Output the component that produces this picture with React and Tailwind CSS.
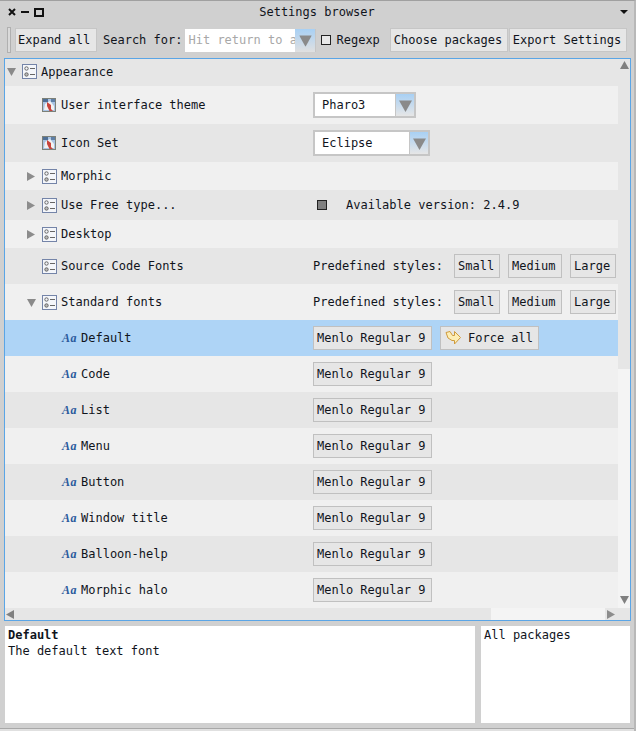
import React from 'react';

const FONT = "font-['DejaVu_Sans_Mono',monospace]";

function TriDown({ className = '' }) {
  return (
    <svg width="9" height="9" viewBox="0 0 9 9" className={className}>
      <path d="M0 1H9L4.5 9Z" fill="#8a8a8a" />
    </svg>
  );
}

function TriRight({ className = '' }) {
  return (
    <svg width="9" height="9" viewBox="0 0 9 9" className={className}>
      <path d="M0 0V9L8 4.5Z" fill="#8c8c8c" />
    </svg>
  );
}

function GroupIcon() {
  return (
    <svg width="15" height="15" viewBox="0 0 15 15" className="mr-px shrink-0">
      <rect x="0.5" y="0.5" width="14" height="14" fill="#f4f6fa" stroke="#7484a8" />
      <circle cx="4.5" cy="4.5" r="1.7" fill="none" stroke="#666" />
      <circle cx="4.5" cy="10.5" r="1.7" fill="#bbb" stroke="#666" />
      <path d="M8 4.5H13M8 10.5H13" stroke="#666" />
    </svg>
  );
}

function ThemeIcon() {
  return (
    <svg width="14" height="14" viewBox="0 0 14 14" className="mr-[2px] shrink-0">
      <rect x="0.5" y="0.5" width="13" height="13" fill="#a9c4e4" stroke="#7c8078" />
      <rect x="1" y="1" width="5" height="3" fill="#4f6f96" />
      <rect x="9" y="1" width="4" height="3" fill="#5f7fa6" />
      <path d="M2 12L3 6L8 3L12 8V12Z" fill="#f2f2f2" />
      <path d="M5 4L9 7L9 11L11 13H7.5L5 8Z" fill="#c8443c" />
    </svg>
  );
}

function FontIcon() {
  return (
    <span className="mr-px w-[15px] shrink-0 whitespace-nowrap font-['Liberation_Serif',serif] text-[12px] font-bold italic leading-none tracking-[0.5px] text-[#2a5a9c]">
      Aa
    </span>
  );
}

function ForceIcon() {
  return (
    <svg width="16" height="14" viewBox="0 0 16 14" className="shrink-0">
      <path
        d="M1 1.5L5 0.5L7.5 4.5H9.5V0.5L15.5 6.5L9.5 13V9.5H7L3 7Z"
        fill="#fdeeb5"
        stroke="#cf9b3d"
        strokeLinejoin="round"
      />
    </svg>
  );
}

function ToolButton({ children, className = 'pl-[3px]' }) {
  return (
    <div className={`flex h-6 items-center whitespace-nowrap border border-[#c6c6c6] bg-[#e6e6e6] ${className}`}>
      {children}
    </div>
  );
}

function RowButton({ children, className = '' }) {
  return (
    <div className={`flex h-6 items-center whitespace-nowrap border border-[#c0c0c0] bg-[#e6e6e6] ${className}`}>
      {children}
    </div>
  );
}

function Dropdown({ value, width }) {
  return (
    <div className={`flex h-[26px] border-2 border-[#c6c6c6] bg-white ${width}`}>
      <div className="flex flex-1 items-center pl-[7px]">{value}</div>
      <div className="flex w-[19px] items-center justify-center border-l border-[#c6c6c6] bg-gradient-to-b from-[#a8d0f4] to-[#e6e6e6]">
        <TriDown className="scale-[1.45]" />
      </div>
    </div>
  );
}

function Row({ height, bg = 'bg-[#f0f0f0]', indent, arrow, icon, label, children }) {
  return (
    <div className={`flex items-center ${height} ${bg}`}>
      <div className={`flex w-[308px] shrink-0 items-center ${indent}`}>
        {arrow && <span className="mr-[5px] flex w-[11px] shrink-0 justify-center">{arrow}</span>}
        {icon}
        <span className="ml-[3px] whitespace-nowrap">{label}</span>
      </div>
      {children}
    </div>
  );
}

function StyleButtons() {
  return (
    <div className="flex items-center">
      <span className="mr-[11px] whitespace-nowrap">Predefined styles:</span>
      <RowButton className="w-[46px] pl-[3px]">Small</RowButton>
      <RowButton className="ml-2 w-[54px] pl-[3px]">Medium</RowButton>
      <RowButton className="ml-2 w-[46px] pl-[3px]">Large</RowButton>
    </div>
  );
}

const FONT_ROWS = [
  { label: 'Code', bg: 'bg-[#f0f0f0]' },
  { label: 'List', bg: 'bg-[#e6e6e6]' },
  { label: 'Menu', bg: 'bg-[#f0f0f0]' },
  { label: 'Button', bg: 'bg-[#e6e6e6]' },
  { label: 'Window title', bg: 'bg-[#f0f0f0]' },
  { label: 'Balloon-help', bg: 'bg-[#e6e6e6]' },
  { label: 'Morphic halo', bg: 'bg-[#f0f0f0]' },
];

export default function App() {
  return (
    <div className={`flex h-[731px] w-[636px] flex-col overflow-hidden border-r-2 border-t border-r-[#b8b8b8] border-t-[#a0a0a0] bg-[#d0d0d0] text-[12px] leading-none text-[#10141c] ${FONT}`}>
      {/* title bar */}
      <div className="flex h-[23px] shrink-0 items-center justify-between pb-[1px] pl-[8px]">
        <div className="flex w-[36px] items-center">
          <svg width="8" height="8" viewBox="0 0 8 8" className="shrink-0"><path d="M1 1L7 7M7 1L1 7" stroke="#111" strokeWidth="2" /></svg>
          <span className="ml-[5px] h-[2px] w-[8px] shrink-0 bg-[#111]" />
          <span className="ml-[5px] h-[9px] w-[10px] shrink-0 border-2 border-[#111]" />
        </div>
        <span className="whitespace-nowrap">Settings browser</span>
        <svg width="44" height="8" viewBox="0 0 44 8"><path d="M30 2H38L34 6Z" fill="#111" /></svg>
      </div>

      {/* toolbar */}
      <div className="ml-[7px] mt-[4px] flex h-6 shrink-0 items-center">
        <span className="mr-[4px] h-[26px] w-[4px] border border-[#b0b0b0] bg-[#dadada]" />
        <ToolButton className="w-[82px] pl-[2px]">Expand all</ToolButton>
        <span className="ml-[6px] mr-[3px] whitespace-nowrap">Search for:</span>
        <div className="flex h-[23px] w-[131px] border-r border-[#c6c6c6] bg-white">
          <div className="flex flex-1 items-center overflow-hidden whitespace-nowrap pl-[3px] text-[#a8a8a8]">Hit return to a</div>
          <div className="flex w-[20px] shrink-0 items-center justify-center bg-gradient-to-b from-[#a8d0f4] to-[#e0e0e0]">
            <TriDown className="scale-[1.4]" />
          </div>
        </div>
        <span className="ml-[5px] h-[10px] w-[10px] border border-[#222] bg-[#e8e8e8]" />
        <span className="ml-[5px] whitespace-nowrap">Regexp</span>
        <ToolButton className="ml-[10px] w-[118px] pl-[3px]">Choose packages</ToolButton>
        <ToolButton className="ml-px w-[118px] pl-[3px]">Export Settings</ToolButton>
      </div>

      {/* settings tree */}
      <div className="ml-[4px] mt-[6px] flex h-[563px] w-[627px] shrink-0 flex-col border border-[#5aa5e6] bg-[#e6e6e6]">
        <div className="flex min-h-0 flex-1">
          <div className="flex w-[613px] shrink-0 flex-col">
            <Row height="h-[27px] pb-[2px]" bg="bg-[#e6e6e6]" indent="pl-[1px]" arrow={<TriDown />} icon={<GroupIcon />} label="Appearance" />
            <Row height="h-[38px]" indent="pl-[37px]" icon={<ThemeIcon />} label="User interface theme">
              <Dropdown value="Pharo3" width="w-[103px]" />
            </Row>
            <Row height="h-[38px]" bg="bg-[#e6e6e6]" indent="pl-[37px]" icon={<ThemeIcon />} label="Icon Set">
              <Dropdown value="Eclipse" width="w-[117px]" />
            </Row>
            <Row height="h-[28px]" indent="pl-[21px]" arrow={<TriRight />} icon={<GroupIcon />} label="Morphic" />
            <Row height="h-[30px]" bg="bg-[#e6e6e6]" indent="pl-[21px]" arrow={<TriRight />} icon={<GroupIcon />} label="Use Free type...">
              <span className="ml-[4px] h-[10px] w-[10px] border border-[#222] bg-[#808080]" />
              <span className="ml-[19px] whitespace-nowrap">Available version: 2.4.9</span>
            </Row>
            <Row height="h-[28px]" indent="pl-[21px]" arrow={<TriRight />} icon={<GroupIcon />} label="Desktop" />
            <Row height="h-[36px]" bg="bg-[#e6e6e6]" indent="pl-[37px]" icon={<GroupIcon />} label="Source Code Fonts">
              <StyleButtons />
            </Row>
            <Row height="h-[36px]" indent="pl-[21px]" arrow={<TriDown />} icon={<GroupIcon />} label="Standard fonts">
              <StyleButtons />
            </Row>
            <Row height="h-[36px]" bg="bg-[#aed4f6]" indent="pl-[57px]" icon={<FontIcon />} label="Default">
              <RowButton className="w-[119px] pl-[3px]">Menlo Regular 9</RowButton>
              <RowButton className="ml-2 w-[99px] gap-[7px] pl-[4px]">
                <ForceIcon />
                Force all
              </RowButton>
            </Row>
            {FONT_ROWS.map((row) => (
              <Row key={row.label} height="h-[36px]" bg={row.bg} indent="pl-[57px]" icon={<FontIcon />} label={row.label}>
                <RowButton className="w-[119px] pl-[3px]">Menlo Regular 9</RowButton>
              </Row>
            ))}
          </div>

          {/* vertical scrollbar */}
          <div className="flex flex-1 flex-col">
            <div className="flex h-[310px] flex-col items-center bg-[#e6e6e6] pt-[2px]">
              <svg width="9" height="8" viewBox="0 0 9 8"><path d="M0 8H9L4.5 0Z" fill="#808080" /></svg>
            </div>
            <div className="flex flex-1 flex-col items-center justify-end bg-[#f4f4f4] pb-[4px]">
              <svg width="9" height="8" viewBox="0 0 9 8"><path d="M0 0H9L4.5 8Z" fill="#808080" /></svg>
            </div>
          </div>
        </div>

        {/* horizontal scrollbar */}
        <div className="flex h-[12px] shrink-0 items-center">
          <div className="flex h-full w-[486px] items-center bg-[#e6e6e6] pl-[1px]">
            <svg width="8" height="9" viewBox="0 0 8 9"><path d="M8 0V9L0 4.5Z" fill="#808080" /></svg>
          </div>
          <div className="h-full w-[114px] bg-[#f4f4f4]" />
          <div className="flex flex-1 items-center pl-[2px]">
            <svg width="8" height="9" viewBox="0 0 8 9"><path d="M0 0V9L8 4.5Z" fill="#8c8c8c" /></svg>
          </div>
        </div>
      </div>

      {/* description panes */}
      <div className="ml-[5px] mt-[5px] flex h-[97px] shrink-0 gap-[6px]">
        <div className="w-[470px] bg-white px-[3px] pt-px leading-[16px]">
          <div className="font-bold">Default</div>
          <div>The default text font</div>
        </div>
        <div className="w-[149px] bg-white px-[3px] pt-px leading-[16px]">All packages</div>
      </div>
      <div className="mt-[5px] flex-1 border-t border-[#a8a8a8] bg-[#e0e0e0]" />
    </div>
  );
}
